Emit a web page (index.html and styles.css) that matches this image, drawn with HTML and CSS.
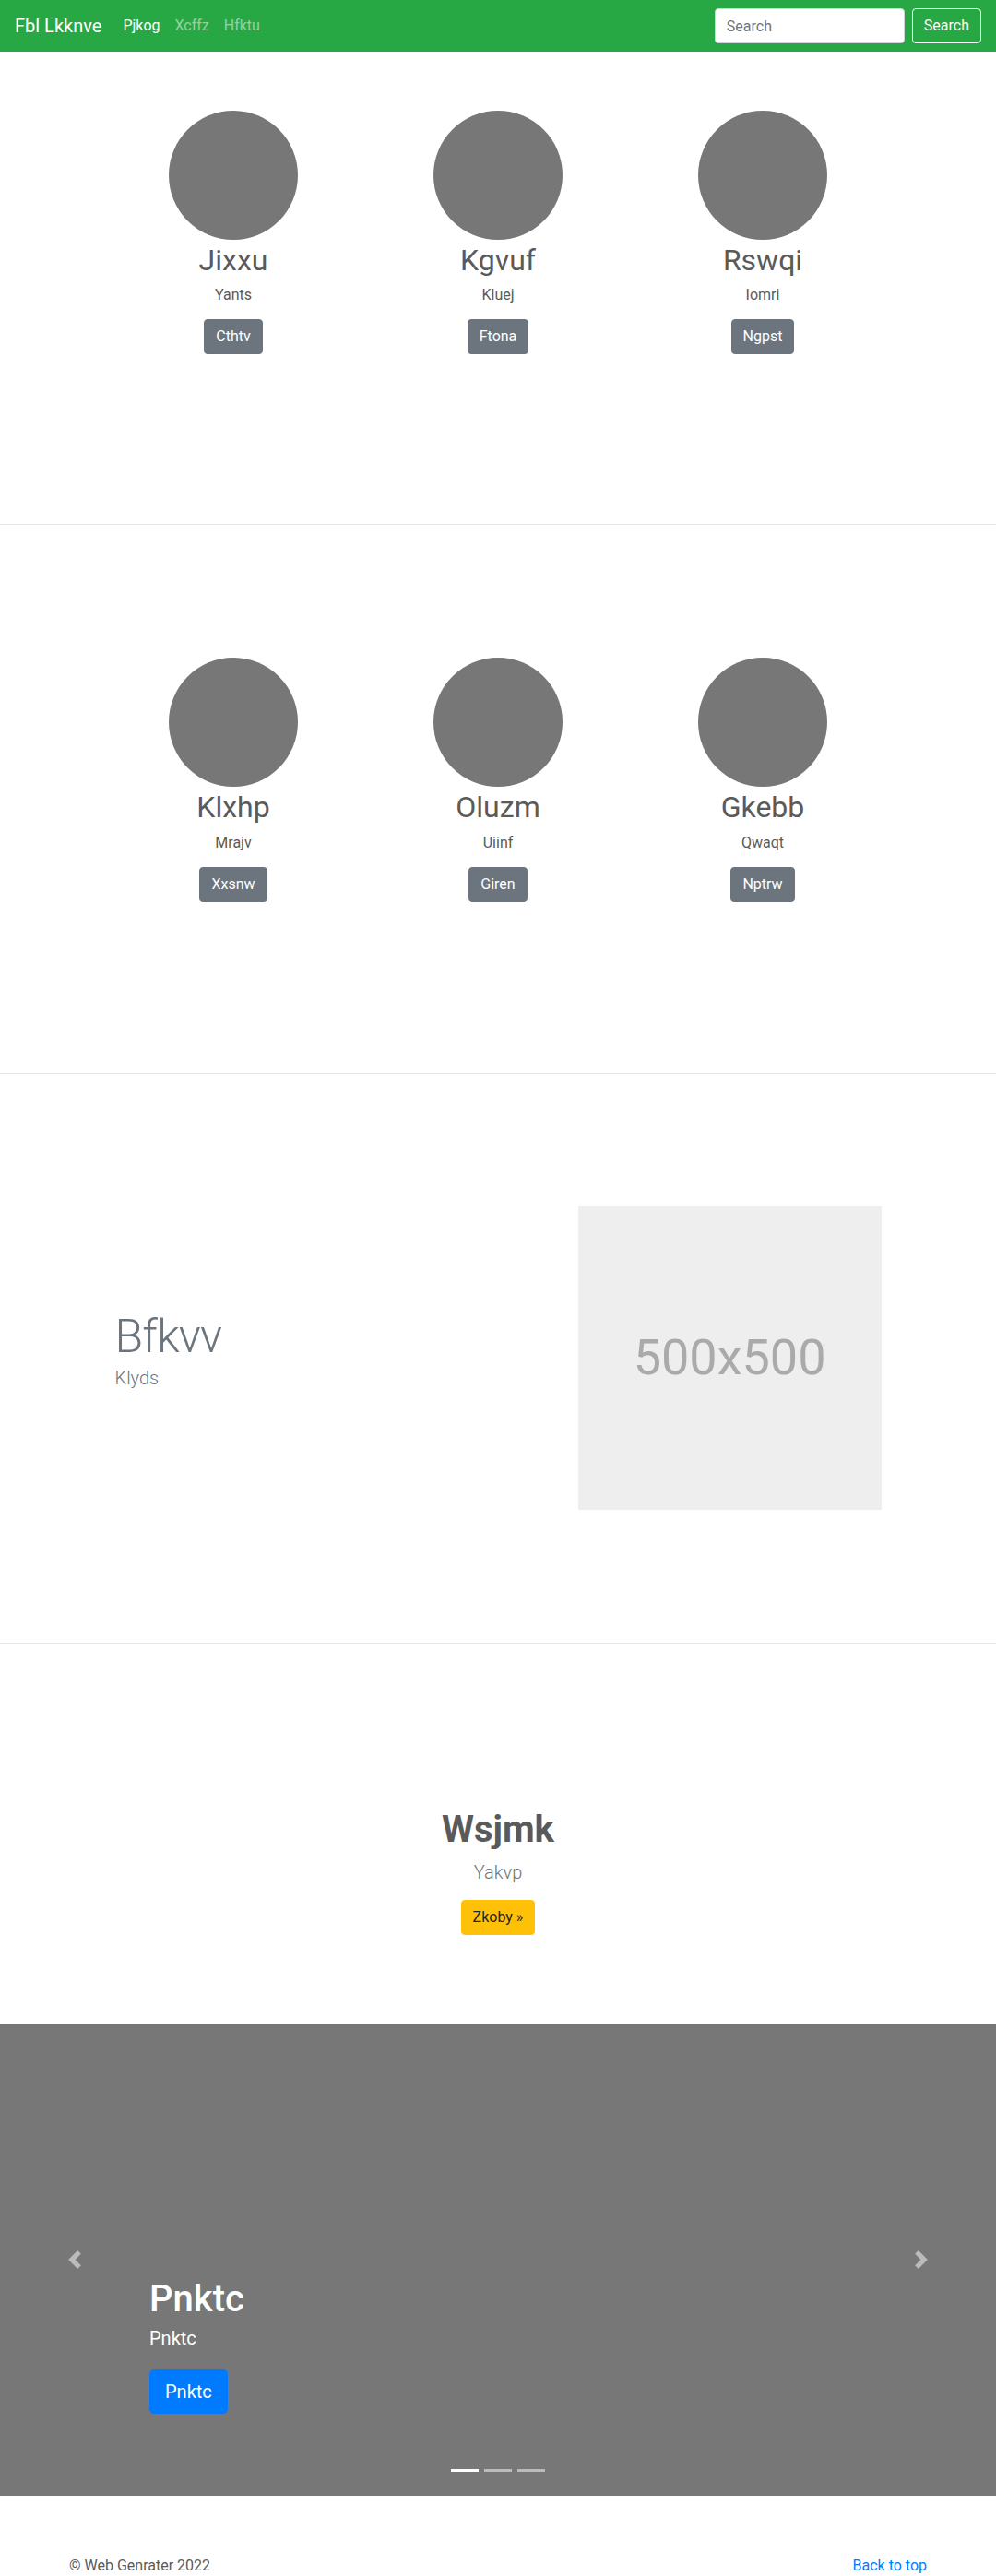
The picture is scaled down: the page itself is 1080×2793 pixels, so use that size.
FILE: index.html
```html
<!DOCTYPE html>
<html lang="en">
<head>
<meta charset="utf-8">
<title>Fbl Lkknve</title>
<link rel="stylesheet" href="styles.css">
</head>
<body>
<nav class="navbar">
  <a class="brand" href="#">Fbl Lkknve</a>
  <ul class="nav">
    <li><a class="nav-link active" href="#">Pjkog</a></li>
    <li><a class="nav-link" href="#">Xcffz</a></li>
    <li><a class="nav-link" href="#">Hfktu</a></li>
  </ul>
  <form class="search">
    <input class="search-input" type="text" placeholder="Search">
    <button class="search-btn" type="button">Search</button>
  </form>
</nav>

<section class="section team team-first">
  <div class="wrap team-row">
    <div class="member">
      <div class="avatar"></div>
      <h2 class="member-name">Jixxu</h2>
      <p class="member-role">Yants</p>
      <a class="btn btn-secondary" href="#">Cthtv</a>
    </div>
    <div class="member">
      <div class="avatar"></div>
      <h2 class="member-name">Kgvuf</h2>
      <p class="member-role">Kluej</p>
      <a class="btn btn-secondary" href="#">Ftona</a>
    </div>
    <div class="member">
      <div class="avatar"></div>
      <h2 class="member-name">Rswqi</h2>
      <p class="member-role">Iomri</p>
      <a class="btn btn-secondary" href="#">Ngpst</a>
    </div>
  </div>
</section>

<section class="section team team-second">
  <div class="wrap team-row">
    <div class="member">
      <div class="avatar"></div>
      <h2 class="member-name">Klxhp</h2>
      <p class="member-role">Mrajv</p>
      <a class="btn btn-secondary" href="#">Xxsnw</a>
    </div>
    <div class="member">
      <div class="avatar"></div>
      <h2 class="member-name">Oluzm</h2>
      <p class="member-role">Uiinf</p>
      <a class="btn btn-secondary" href="#">Giren</a>
    </div>
    <div class="member">
      <div class="avatar"></div>
      <h2 class="member-name">Gkebb</h2>
      <p class="member-role">Qwaqt</p>
      <a class="btn btn-secondary" href="#">Nptrw</a>
    </div>
  </div>
</section>

<section class="section featurette">
  <div class="wrap feat-row">
    <div class="feat-text">
      <h2 class="feat-heading">Bfkvv</h2>
      <p class="lead">Klyds</p>
    </div>
    <div class="feat-media">
      <div class="placeholder">500x500</div>
    </div>
  </div>
</section>

<section class="hero">
  <h1 class="hero-title">Wsjmk</h1>
  <p class="lead hero-lead">Yakvp</p>
  <div class="hero-actions">
    <a class="btn btn-warning" href="#">Zkoby &raquo;</a>
  </div>
</section>

<div class="carousel">
  <ol class="indicators">
    <li class="active"></li>
    <li></li>
    <li></li>
  </ol>
  <div class="carousel-caption">
    <h1 class="caption-title">Pnktc</h1>
    <p class="caption-text">Pnktc</p>
    <div class="caption-action"><a class="btn btn-lg btn-primary" href="#">Pnktc</a></div>
  </div>
  <a class="carousel-control prev" href="#" aria-label="Previous">
    <svg viewBox="0 0 8 8" fill="#fff"><path d="M5.25 0l-4 4 4 4 1.5-1.5L4.25 4l2.5-2.5L5.25 0z"/></svg>
  </a>
  <a class="carousel-control next" href="#" aria-label="Next">
    <svg viewBox="0 0 8 8" fill="#fff"><path d="M2.75 0l-1.5 1.5L3.75 4l-2.5 2.5L2.75 8l4-4-4-4z"/></svg>
  </a>
</div>

<footer class="footer">
  <p class="to-top"><a href="#">Back to top</a></p>
  <p class="copy">&copy; Web Genrater 2022</p>
</footer>
</body>
</html>
```

FILE: styles.css
```css
* { box-sizing: border-box; }

body {
  margin: 0;
  font-family: Roboto, "Helvetica Neue", Arial, "Noto Sans", sans-serif;
  font-size: 16px;
  line-height: 1.5;
  color: #5a5a5a;
  background: #fff;
}

a { color: #007bff; text-decoration: none; }

/* navbar */
.navbar {
  display: flex;
  align-items: center;
  height: 56px;
  padding: 8px 16px;
  background: #28a745;
}
.brand {
  font-size: 20px;
  line-height: 30px;
  padding: 5px 0;
  margin-right: 15px;
  color: #fff;
}
.nav {
  display: flex;
  list-style: none;
  margin: 0;
  padding: 0;
}
.nav-link {
  display: block;
  padding: 8px;
  color: rgba(255, 255, 255, 0.5);
}
.nav-link.active { color: #fff; }
.search {
  margin: 0 0 0 auto;
  display: flex;
  align-items: center;
}
.search-input {
  width: 206px;
  height: 38px;
  padding: 6px 12px;
  margin-right: 8px;
  font: inherit;
  color: #495057;
  background: #fff;
  border: 1px solid #ced4da;
  border-radius: 4px;
}
.search-input::placeholder { color: #6c757d; }
.search-btn {
  height: 38px;
  padding: 6px 12px;
  font: inherit;
  color: #f8f9fa;
  background: transparent;
  border: 1px solid #f8f9fa;
  border-radius: 4px;
}

/* generic */
.section { border-bottom: 1px solid rgba(0, 0, 0, 0.1); }
.wrap {
  max-width: 861px;
  margin: 0 auto;
}
.btn {
  display: inline-block;
  padding: 6px 12px;
  font-size: 16px;
  line-height: 24px;
  border: 1px solid transparent;
  border-radius: 4px;
  text-align: center;
}
.btn-secondary { color: #fff; background: #6c757d; border-color: #6c757d; }
.btn-warning { color: #212529; background: #ffc107; border-color: #ffc107; }
.btn-primary { color: #fff; background: #007bff; border-color: #007bff; }
.btn-lg {
  padding: 8px 16px;
  font-size: 20px;
  line-height: 30px;
  border-radius: 4.8px;
}
.lead {
  font-size: 20px;
  font-weight: 300;
  line-height: 30px;
  color: #6c757d;
}

/* team */
.team-first { padding: 64px 0 184px; }
.team-second { padding: 144px 0 185px; }
.team-row {
  display: grid;
  grid-template-columns: repeat(3, 1fr);
}
.member {
  display: flex;
  flex-direction: column;
  align-items: center;
  text-align: center;
}
.avatar {
  width: 140px;
  height: 140px;
  border-radius: 50%;
  background: #777;
}
.member-name {
  margin: 3px 0 7px;
  font-size: 32px;
  font-weight: 400;
  line-height: 1.2;
  color: #5a5a5a;
}
.member-role { margin: 0 0 14px; }

/* featurette */
.featurette { padding: 144px 0; }
.feat-row {
  display: grid;
  grid-template-columns: 7fr 5fr;
  align-items: center;
}
.feat-text, .feat-media { padding: 0 15px; }
.feat-text { padding-bottom: 12px; }
.feat-heading {
  margin: 0 0 5px;
  font-size: 50px;
  font-weight: 300;
  line-height: 1;
  letter-spacing: -0.8px;
  color: #6c757d;
}
.feat-text .lead { margin: 0; }
.placeholder {
  display: flex;
  align-items: center;
  justify-content: center;
  aspect-ratio: 1 / 1;
  width: 100%;
  background: #eee;
  color: #aaa;
  font-size: 54px;
  line-height: 1;
}

/* hero */
.hero {
  padding: 178px 15px 96px;
  text-align: center;
}
.hero-title {
  margin: 0 0 7px;
  font-size: 40px;
  font-weight: 700;
  line-height: 1.2;
  color: #5a5a5a;
}
.hero-lead { margin: 0 0 15px; }
.hero-actions { display: flex; justify-content: center; }

/* carousel */
.carousel {
  position: relative;
  height: 512px;
  margin-bottom: 64px;
  background: #777;
  overflow: hidden;
}
.carousel-caption {
  position: absolute;
  left: 15%;
  right: 15%;
  bottom: 49px;
  z-index: 10;
  padding: 20px 0;
  color: #fff;
  text-align: left;
}
.caption-title {
  margin: 0 0 4px;
  font-size: 40px;
  font-weight: 500;
  line-height: 1.2;
}
.caption-text {
  margin: 0 0 20px;
  font-size: 20px;
  line-height: 1.4;
}
.caption-action { display: flex; margin: 0 0 20px; }
.carousel-control {
  position: absolute;
  top: 0;
  bottom: 0;
  width: 15%;
  display: flex;
  align-items: center;
  justify-content: center;
  opacity: 0.5;
}
.carousel-control.prev { left: 0; }
.carousel-control.next { right: 0; }
.carousel-control svg { width: 20px; height: 20px; }
.indicators {
  position: absolute;
  left: 15%;
  right: 15%;
  bottom: 0;
  z-index: 15;
  display: flex;
  justify-content: center;
  list-style: none;
  margin: 0 0 16px;
  padding: 0;
}
.indicators li {
  box-sizing: content-box;
  width: 30px;
  height: 3px;
  margin: 0 3px;
  border-top: 10px solid transparent;
  border-bottom: 10px solid transparent;
  background: #fff;
  background-clip: padding-box;
  opacity: 0.5;
}
.indicators li.active { opacity: 1; }

/* footer */
.footer {
  max-width: 960px;
  margin: 0 auto;
  padding: 0 15px;
}
.footer p { margin: 0 0 16px; }
.to-top { float: right; }
```
